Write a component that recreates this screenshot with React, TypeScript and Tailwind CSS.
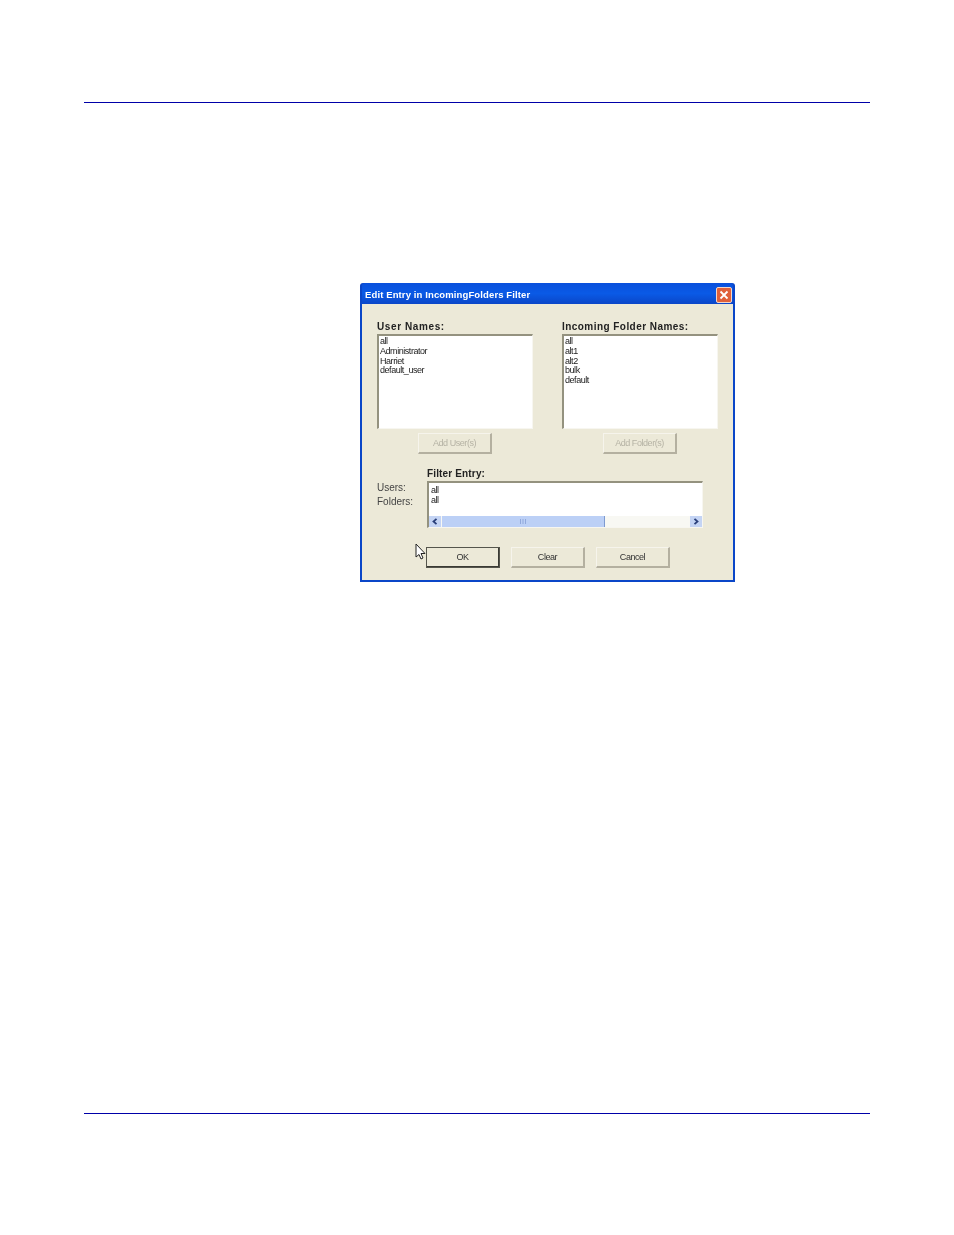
import React from "react";

const font = { fontFamily: '"Liberation Sans", Arial, sans-serif' };

function Btn({ label, disabled, primary, className = "" }: { label: string; disabled?: boolean; primary?: boolean; className?: string }) {
  return (
    <div
      className={`flex h-[21px] w-[74px] items-center justify-center bg-[#ece9d8] pt-px text-[9px] tracking-[-0.45px] border-t border-l border-t-[#f6f4ec] border-l-[#f6f4ec] ${
        primary
          ? "border-r-2 border-b-2 border-r-[#3a3a34] border-b-[#3a3a34] outline outline-1 -outline-offset-1 outline-[#55554c]"
          : "border-r-2 border-b-2 border-r-[#b4b0a0] border-b-[#b4b0a0]"
      } ${disabled ? "text-[#b5b2a4]" : "text-[#333]"} ${className}`}
    >
      {label}
    </div>
  );
}

function ListBox({ title, items, titleSpacing }: { title: string; items: string[]; titleSpacing?: string }) {
  return (
    <div className="flex w-[156px] flex-col">
      <div className={`-mt-px h-[14px] text-[10px] font-bold leading-[14px] text-[#222] ${titleSpacing ?? ""}`}>{title}</div>
      <div className="flex h-[95px] flex-col border-t-2 border-l-2 border-r border-b border-t-[#94927f] border-l-[#94927f] border-r-[#f7f6f0] border-b-[#f7f6f0] bg-white pl-[1px] pt-px text-[9px] leading-[9.8px] tracking-[-0.45px] text-[#222]">
        {items.map((t) => (
          <div key={t}>{t}</div>
        ))}
      </div>
    </div>
  );
}

export default function App() {
  return (
    <div className="relative h-[1235px] w-[954px] bg-white" style={font}>
      <div className="ml-[84px] w-[786px] pt-[102px]">
        <div className="h-px bg-[#0000a8]" />
      </div>

      <div className="ml-[360px] mt-[180px] flex h-[299px] w-[375px] flex-col rounded-t-[3px] bg-[#0a46c8] p-[2px] pt-0 will-change-transform">
        {/* title bar */}
        <div className="flex h-[21px] shrink-0 items-center justify-between rounded-t-[3px] bg-gradient-to-b from-[#0a50dc] via-[#0a5ae6] to-[#0a46c8] pl-[3px] pr-[1px] pt-[3px]">
          <span className="text-[9.5px] font-bold tracking-[0.12px] text-white">Edit Entry in IncomingFolders Filter</span>
          <span className="flex h-[16px] w-[16px] items-center justify-center rounded-[2px] border border-[#f4d6c8] bg-[#e0603a]">
            <svg width="10" height="10" viewBox="0 0 10 10">
              <path d="M1.5 1.5 L8.5 8.5 M8.5 1.5 L1.5 8.5" stroke="#fff" strokeWidth="1.8" />
            </svg>
          </span>
        </div>

        {/* body */}
        <div className="flex flex-1 flex-col bg-[#ece9d8] pl-[15px] pt-[17px]">
          <div className="flex gap-[29px]">
            <ListBox title="User Names:" items={["all", "Administrator", "Harriet", "default_user"]} titleSpacing="tracking-[0.6px]" />
            <ListBox title="Incoming Folder Names:" items={["all", "alt1", "alt2", "bulk", "default"]} titleSpacing="tracking-[0.45px]" />
          </div>

          <div className="mt-[4px] flex">
            <Btn label="Add User(s)" disabled className="ml-[41px]" />
            <Btn label="Add Folder(s)" disabled className="ml-[111px]" />
          </div>

          <div className="mt-[14px] flex">
            <div className="flex w-[50px] flex-col pt-[13px] text-[10px] leading-[14px] text-[#444]">
              <div>Users:</div>
              <div>Folders:</div>
            </div>
            <div className="flex w-[276px] flex-col">
              <div className="h-[13px] text-[10px] font-bold leading-[11px] tracking-[0.15px] text-[#222]">Filter Entry:</div>
              <div className="flex h-[47px] flex-col justify-between border-t-2 border-l-2 border-r border-b border-t-[#94927f] border-l-[#94927f] border-r-[#f7f6f0] border-b-[#f7f6f0] bg-white">
                <div className="pl-[2px] pt-[2px] text-[9px] leading-[10px] tracking-[-0.45px] text-[#222]">
                  <div>all</div>
                  <div>all</div>
                </div>
                <div className="flex h-[11px] bg-[#f8f8f3]">
                  <div className="flex w-[12px] items-center justify-center bg-[#c4d4f4]">
                    <svg width="6" height="7" viewBox="0 0 6 7">
                      <path d="M4.5 .8 L1.5 3.5 L4.5 6.2" fill="none" stroke="#2a3f7a" strokeWidth="1.8" />
                    </svg>
                  </div>
                  <div className="ml-px flex w-[163px] items-center justify-center border-r border-r-[#7e9ad0] bg-[#bcd0f6]">
                    <svg width="6" height="5" viewBox="0 0 6 5">
                      <path d="M.5 0 V5 M3 0 V5 M5.5 0 V5" stroke="#90a8dc" strokeWidth="1" />
                    </svg>
                  </div>
                  <div className="flex-1" />
                  <div className="flex w-[12px] items-center justify-center bg-[#c4d4f4]">
                    <svg width="6" height="7" viewBox="0 0 6 7">
                      <path d="M1.5 .8 L4.5 3.5 L1.5 6.2" fill="none" stroke="#2a3f7a" strokeWidth="1.8" />
                    </svg>
                  </div>
                </div>
              </div>
            </div>
          </div>

          <div className="ml-[49px] mt-[19px] flex gap-[11px]">
            <Btn label="OK" primary />
            <Btn label="Clear" />
            <Btn label="Cancel" className="w-[73px]" />
          </div>
        </div>
      </div>

      {/* pointer */}
      <svg className="absolute left-[415px] top-[543px]" width="12" height="18" viewBox="0 0 12 18">
        <path d="M1 1 L1 14 L4 11.5 L6 16 L8 15 L6 10.5 L10 10.5 Z" fill="#fff" stroke="#222" strokeWidth="1" />
      </svg>

      <div className="ml-[84px] mt-[531px] w-[786px]">
        <div className="h-px bg-[#0000a8]" />
      </div>
    </div>
  );
}
